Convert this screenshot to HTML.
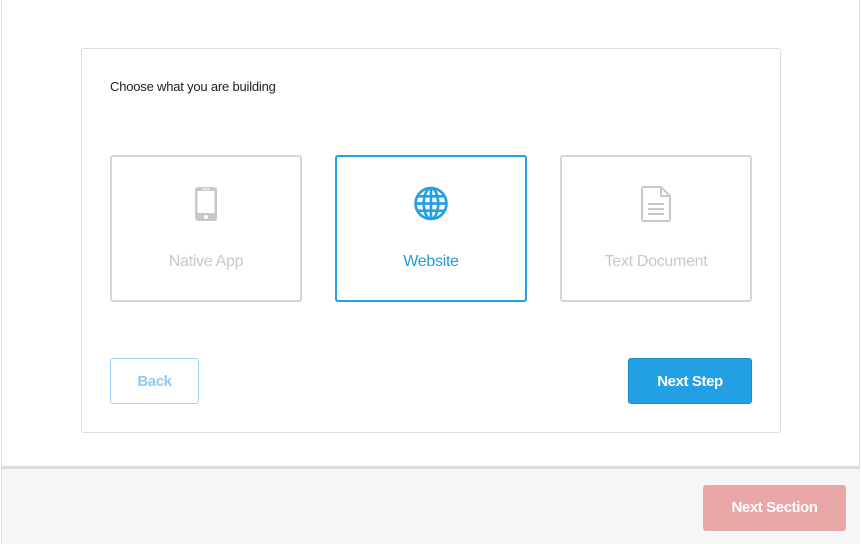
<!DOCTYPE html>
<html><head><style>
*{box-sizing:border-box;margin:0;padding:0}
body{width:861px;height:544px;overflow:hidden;background:#fff;font-family:"Liberation Sans",sans-serif;position:relative}
.frame{position:absolute;left:1px;top:0;width:859px;height:467px;border-left:1px solid #ddd;border-right:1px solid #ddd}
.footer{position:absolute;left:1px;top:466px;width:859px;height:78px;background:#f6f6f6;border-top:3px solid #dcdcdc;border-left:1px solid #ddd}
.card{position:absolute;left:81px;top:48px;width:700px;height:385px;border:1px solid #dcdcdc;border-radius:3px}
.title{position:absolute;left:110px;top:79px;font-size:13px;color:#222;letter-spacing:-0.2px}
.opt{position:absolute;top:155px;width:192px;height:147px;border:2px solid #d6d6d6;border-radius:3px;text-align:center;color:#c8c8c8;font-size:16px;letter-spacing:-0.3px}
.opt.sel{border-color:#22a0e3;color:#1f9ae0}
.opt svg{position:absolute;left:50%;top:29px;transform:translateX(-50%)}
.opt span{position:absolute;left:0;right:0;top:96px}
.btn{position:absolute;top:358px;height:46px;border-radius:3px;font-weight:bold;font-size:15px;text-align:center;line-height:45px;letter-spacing:-0.4px}
</style></head><body>
<div class="frame"></div>
<div class="card"></div>
<div class="title">Choose what you are building</div>
<div class="opt" style="left:110px"><svg width="24" height="36" viewBox="0 0 24 36"><rect x="1" y="1" width="22" height="34" rx="3" fill="#c8c8c8"/><rect x="3.5" y="5" width="17" height="22" fill="#fff"/><rect x="8" y="2.5" width="8" height="1" fill="#fff"/><circle cx="12" cy="31" r="2" fill="#fff"/></svg><span>Native App</span></div>
<div class="opt sel" style="left:335px"><svg width="35" height="35" viewBox="0 0 34 34" fill="none" stroke="#22a0e3" stroke-width="2.6"><circle cx="17" cy="17" r="15"/><ellipse cx="17" cy="17" rx="7" ry="15"/><line x1="17" y1="2" x2="17" y2="32"/><line x1="2" y1="17" x2="32" y2="17"/><line x1="4" y1="10" x2="30" y2="10"/><line x1="4" y1="24" x2="30" y2="24"/></svg><span>Website</span></div>
<div class="opt" style="left:560px"><svg width="32" height="36" viewBox="0 0 32 36" fill="none" stroke="#c8c8c8" stroke-width="2"><path d="M3 1H21L30 10V33Q30 35 28 35H4Q2 35 2 33V3Q2 1 4 1Z"/><path d="M21 1V10H30"/><line x1="8" y1="18" x2="24" y2="18"/><line x1="8" y1="23" x2="24" y2="23"/><line x1="8" y1="28" x2="24" y2="28"/></svg><span>Text Document</span></div>
<div class="btn" style="left:110px;width:89px;border:1px solid #9fd6f3;color:#8ccdf0">Back</div>
<div class="btn" style="left:628px;width:124px;background:#22a0e3;border:1px solid #1c8ccb;color:#fff">Next Step</div>
<div class="footer"></div>
<div class="btn" style="left:703px;top:485px;width:143px;background:#eaa7a8;color:#fff">Next Section</div>
</body></html>
